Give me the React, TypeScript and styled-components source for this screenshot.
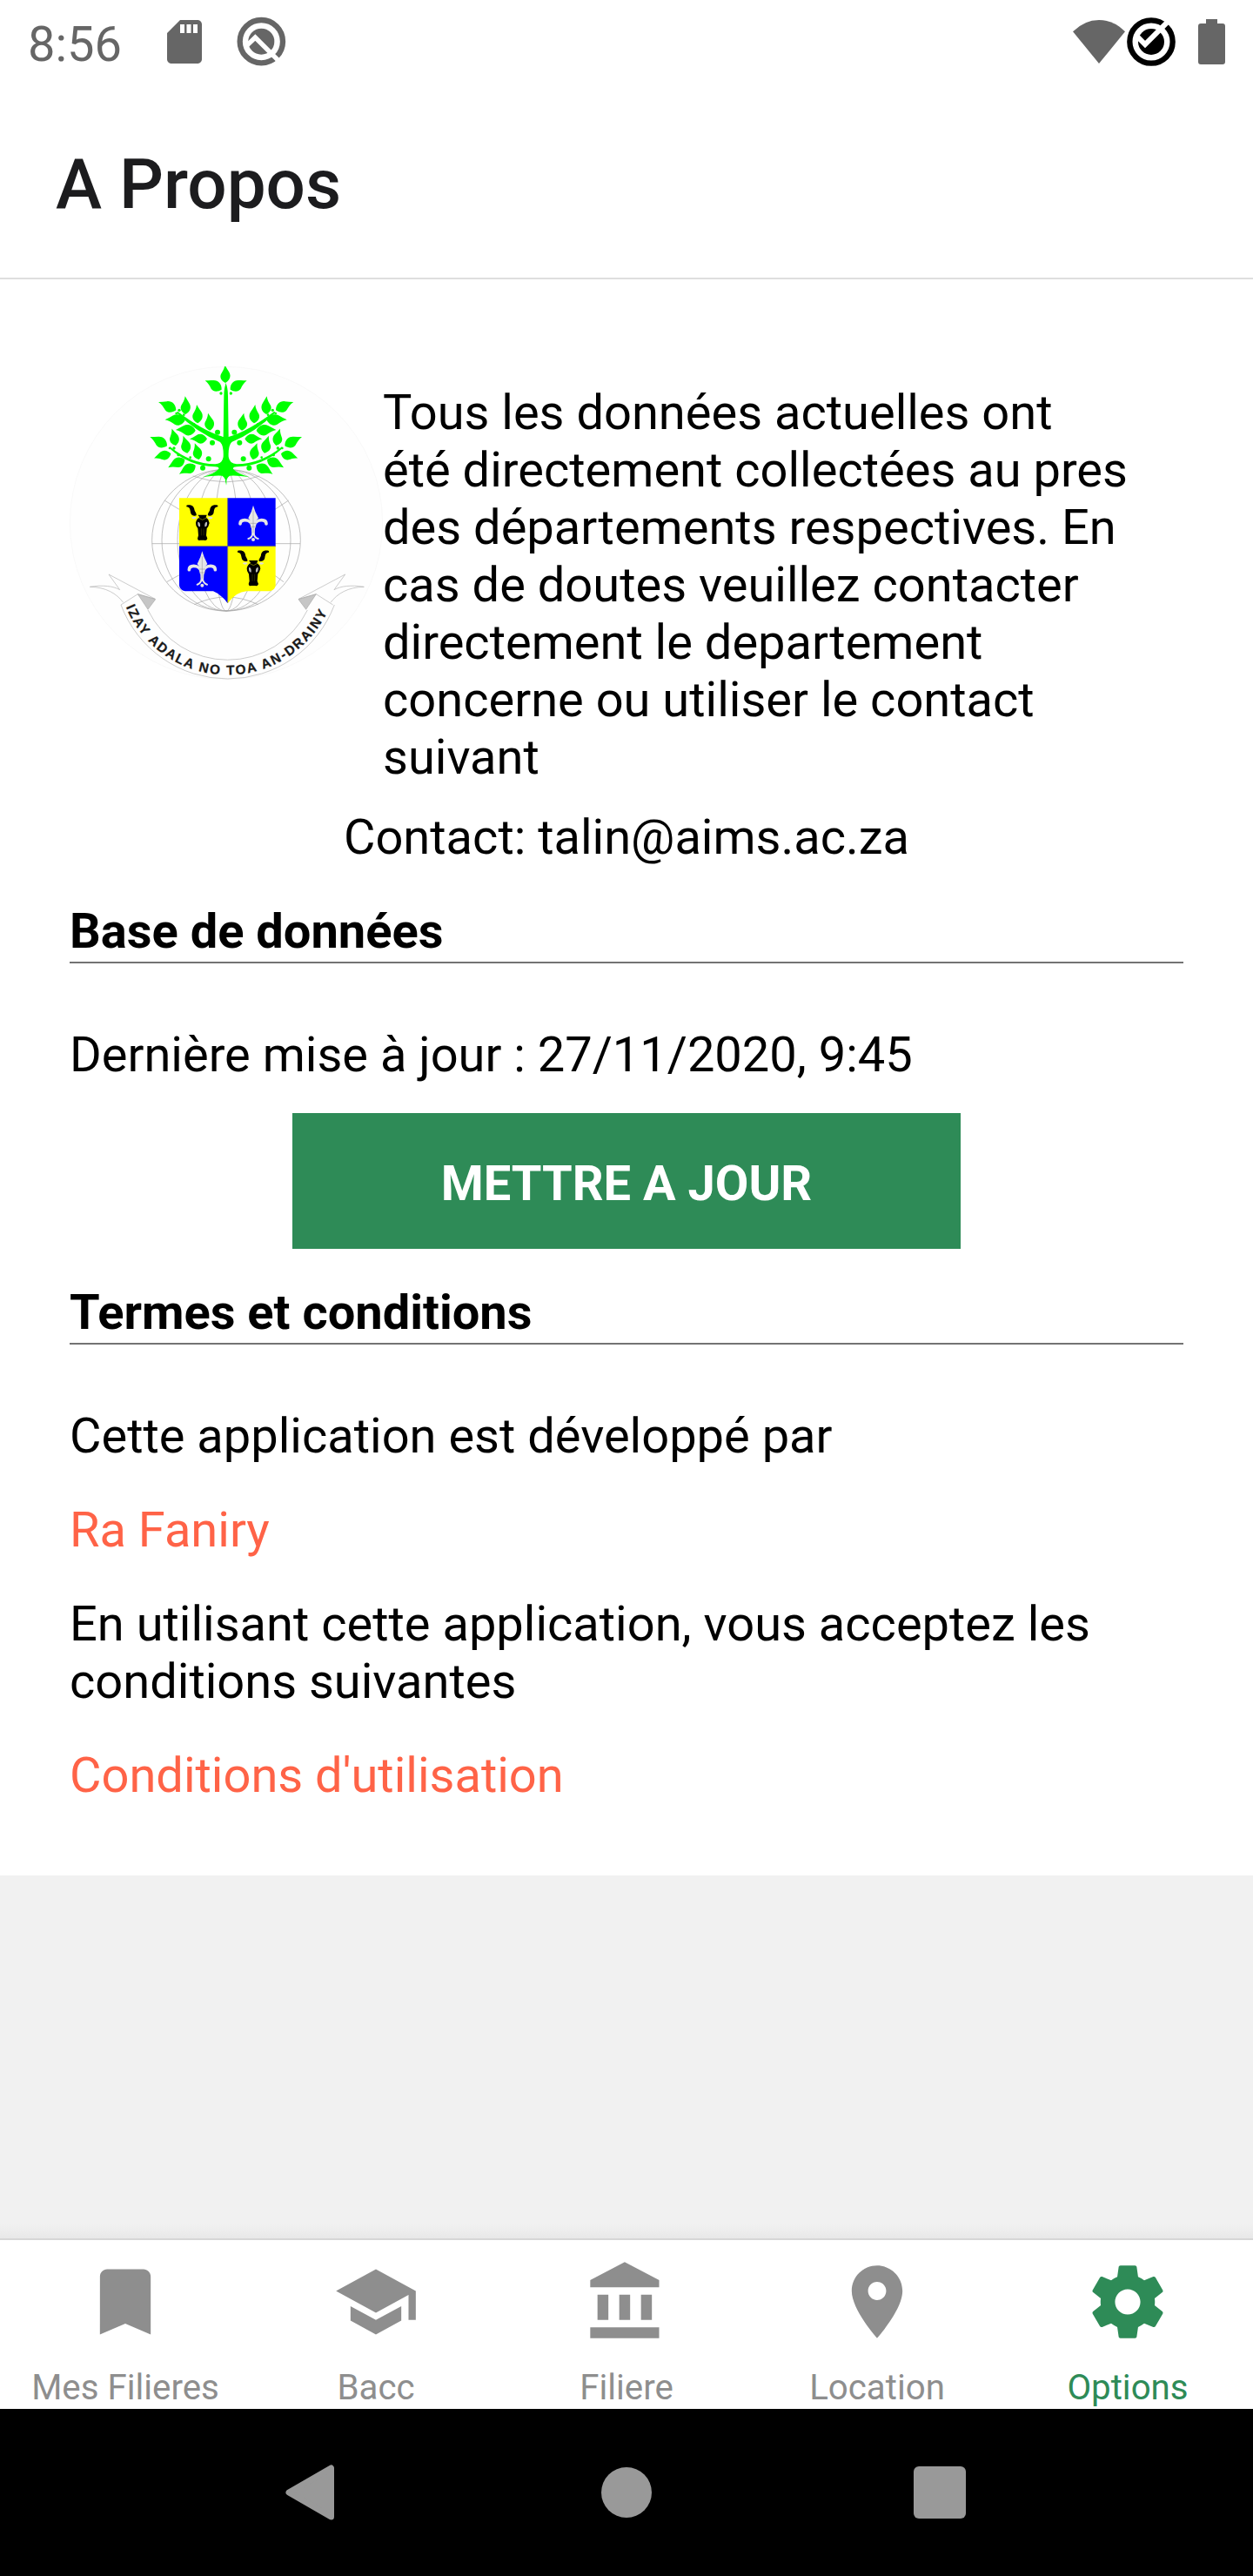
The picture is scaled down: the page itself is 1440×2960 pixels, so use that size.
import React from "react";
import styled, { createGlobalStyle } from "styled-components";

const GREEN = "#2e8b57";
const GREY = "#8e8e8e";

const GlobalStyle = createGlobalStyle`
  * { box-sizing: border-box; }
  body { margin: 0; background: #f1f1f1; font-family: Roboto, "Liberation Sans", sans-serif; }
  svg { display: block; flex: none; }
`;

const Screen = styled.div`
  width: 1440px;
  height: 2960px;
  display: flex;
  flex-direction: column;
  background: #f1f1f1;
  overflow: hidden;
`;

const StatusBar = styled.div`
  height: 84px;
  flex: none;
  display: flex;
  justify-content: space-between;
  padding: 18px 31px 0 32px;
  background: #fff;
`;

const StatusGroup = styled.div`
  display: flex;
  align-items: flex-start;
`;

const Clock = styled.span`
  width: 150px;
  font-size: 56px;
  line-height: 66px;
  color: #666;
`;

const StatusIcon = styled.svg<{ $left?: number; $top?: number }>`
  margin-left: ${(p) => p.$left ?? 0}px;
  margin-top: ${(p) => p.$top ?? 0}px;
`;

const TitleBar = styled.header`
  height: 237px;
  flex: none;
  padding: 81px 64px 0;
  background: #fff;
  border-bottom: 2px solid #dedede;
`;

const Title = styled.h1`
  margin: 0;
  font-size: 80px;
  line-height: 94px;
  font-weight: 500;
  color: #1c1c1e;
`;

const Content = styled.main`
  height: 1834px;
  flex: none;
  padding: 100px 80px 0;
  background: #fff;
  font-size: 56px;
  line-height: 66px;
  color: #000;
`;

const Intro = styled.section`
  display: flex;
`;

const IntroText = styled.p`
  margin: 20px 0 0;
  white-space: nowrap;
`;

const Contact = styled.p`
  margin: 26px 0 42px;
  text-align: center;
`;

const SectionTitle = styled.h2`
  margin: 0 0 72px;
  padding-bottom: 2px;
  border-bottom: 2px solid #737373;
  font-size: 56px;
  line-height: 66px;
  font-weight: 700;
`;

const Paragraph = styled.p<{ $gap: number }>`
  margin: 0 0 ${(p) => p.$gap}px;
`;

const TextLink = styled.a`
  display: block;
  margin-bottom: 42px;
  color: #ff6347;
`;

const UpdateButton = styled.button`
  display: block;
  width: 768px;
  height: 156px;
  margin: 0 auto 40px;
  padding: 6px 0 0;
  border: 0;
  background: ${GREEN};
  color: #fff;
  font: 700 56px/66px Roboto, "Liberation Sans", sans-serif;
`;

const Spacer = styled.div`
  flex: 1;
  background: linear-gradient(to bottom, #f1f1f1 calc(100% - 16px), #e8e8e8);
`;

const TabBar = styled.nav`
  height: 196px;
  flex: none;
  display: grid;
  grid-template-columns: repeat(5, 1fr);
  background: #fff;
  border-top: 2px solid #d6d6d6;
`;

const Tab = styled.div<{ $active?: boolean }>`
  display: flex;
  flex-direction: column;
  align-items: center;
  padding-top: 20.5px;
  color: ${(p) => (p.$active ? GREEN : GREY)};
`;

const TabLabel = styled.span`
  margin-top: 25.5px;
  font-size: 40.25px;
  line-height: 47px;
`;

const SystemNav = styled.div`
  height: 192px;
  flex: none;
  display: flex;
  align-items: center;
  justify-content: center;
  gap: 301px;
  padding-right: 2px;
  background: #000;
`;

const TABS = [
  { label: "Mes Filieres", d: "M17 3H7c-1.1 0-1.99.9-1.99 2L5 21l7-3 7 3V5c0-1.1-.9-2-2-2z" },
  { label: "Bacc", d: "M5 13.18v4L12 21l7-3.82v-4L12 17l-7-3.82zM12 3L1 9l11 6 9-4.91V17h2V9L12 3z" },
  { label: "Filiere", d: "M4 10v7h3v-7H4zm6 0v7h3v-7h-3zM2 22h19v-3H2v3zm14-12v7h3v-7h-3zm-4.5-9L2 6v2h19V6l-9.5-5z" },
  {
    label: "Location",
    d: "M12 2C8.13 2 5 5.13 5 9c0 5.25 7 13 7 13s7-7.75 7-13c0-3.87-3.13-7-7-7zm0 9.5c-1.38 0-2.5-1.12-2.5-2.5s1.12-2.5 2.5-2.5 2.5 1.12 2.5 2.5-1.12 2.5-2.5 2.5z",
  },
  {
    label: "Options",
    active: true,
    d: "M19.43 12.98c.04-.32.07-.64.07-.98s-.03-.66-.07-.98l2.11-1.65c.19-.15.24-.42.12-.64l-2-3.46c-.12-.22-.39-.3-.61-.22l-2.49 1c-.52-.4-1.08-.73-1.69-.98l-.38-2.65C14.46 2.18 14.25 2 14 2h-4c-.25 0-.46.18-.49.42l-.38 2.65c-.61.25-1.17.59-1.69.98l-2.49-1c-.23-.09-.49 0-.61.22l-2 3.46c-.13.22-.07.49.12.64l2.11 1.65c-.04.32-.07.65-.07.98s.03.66.07.98l-2.11 1.65c-.19.15-.24.42-.12.64l2 3.46c.12.22.39.3.61.22l2.49-1c.52.4 1.08.73 1.69.98l.38 2.65c.03.24.24.42.49.42h4c.25 0 .46-.18.49-.42l.38-2.65c.61-.25 1.17-.59 1.69-.98l2.49 1c.23.09.49 0 .61-.22l2-3.46c.12-.22.07-.49-.12-.64l-2.11-1.65zM12 15.5c-1.93 0-3.5-1.57-3.5-3.5s1.57-3.5 3.5-3.5 3.5 1.57 3.5 3.5-1.57 3.5-3.5 3.5z",
  },
];

/* Leaves of one half of the tree: base x, base y, tip x, tip y. */
const LEAVES: number[][] = [
  [554, 143, 498, 110],
  [397, 214, 337, 184],
  [430, 228, 430, 166],
  [472, 259, 470, 195],
  [514, 284, 509, 224],
  [428, 249, 359, 245],
  [464, 284, 396, 280],
  [504, 313, 444, 312],
  [366, 337, 308, 304],
  [396, 336, 384, 277],
  [436, 362, 423, 302],
  [476, 384, 463, 327],
  [379, 364, 321, 378],
  [427, 384, 369, 410],
  [464, 404, 407, 433],
];

/* Berries of one half of the tree: centre x, centre y, radius. */
const BERRIES: number[][] = [
  [552, 156, 5],
  [408, 214, 5],
  [398, 225, 4],
  [424, 230, 4],
  [459, 262, 4],
  [540, 290, 9],
  [522, 326, 9],
  [509, 382, 9],
  [489, 413, 9],
  [375, 345, 4],
  [390, 345, 5],
  [405, 368, 5],
  [446, 377, 4],
];

function Leaf({ c }: { c: number[] }) {
  const [bx, by, tx, ty] = c;
  const len = Math.hypot(tx - bx, ty - by);
  const angle = (Math.atan2(ty - by, tx - bx) * 180) / Math.PI;
  return (
    <path
      transform={`translate(${bx} ${by}) rotate(${angle}) scale(${len})`}
      d="M0 0C.1 -.2 .3 -.34 .5 -.24C.66 -.14 .78 -.06 1 -.03C.86 .05 .74 .12 .62 .2C.4 .34 .14 .26 0 0Z"
    />
  );
}

function TreeHalf() {
  return (
    <>
      {LEAVES.map((c, i) => (
        <Leaf key={i} c={c} />
      ))}
      {BERRIES.map(([x, y, r], i) => (
        <circle key={i} cx={x} cy={y} r={r} />
      ))}
      <path d="M570 120Q562 136 562 165L560 306Q490 285 402 218L399 223Q470 292 548 323Q562 335 560 375Q557 398 532 400Q450 400 376 340L373 344Q440 406 532 409Q548 410 543 418Q528 434 488 445Q530 438 556 440Q568 446 571 473Z" />
    </>
  );
}

function BullHead() {
  return (
    <g>
      <path
        d="M433 542C449 537 459 545 460 556C461 565 469 569 467 577C459 581 448 575 447 566C445 555 445 549 433 547ZM541 542C525 537 515 545 514 556C513 565 505 569 507 577C515 581 526 575 527 566C529 555 529 549 541 547Z"
        fill="#000"
      />
      <path d="M450 584Q460 579 468 584Q462 592 454 588ZM524 584Q514 579 506 584Q512 592 520 588Z" fill="#ddd" />
      <path
        d="M472 575H503L500 583Q510 590 512 603Q509 616 503 622L501 646L505 656Q502 665 494 662H480Q472 665 471 656L474 646L472 622Q464 612 465 602Q467 590 478 583Z"
        fill="#000"
      />
      <path d="M472 599Q482 599 480 616Q470 616 472 599ZM504 599Q494 599 496 616Q506 616 504 599Z" fill="#bbb" />
      <path d="M472 584L488 592L504 584" fill="none" stroke="#cc0" strokeWidth="1.5" />
      <path d="M484 622V646M492 622V646" fill="none" stroke="#660" strokeWidth="1.2" />
    </g>
  );
}

function Fleur() {
  return (
    <g fill="#e6e6e6">
      <path d="M663 542Q668 562 681 586Q672 594 668 606H658Q654 594 646 586Q659 562 663 542Z" />
      <path
        d="M660 616C659 602 648 593 634 593C623 593 618 598 618 606M666 616C667 602 678 593 692 593C703 593 708 598 708 606"
        fill="none"
        stroke="#e6e6e6"
        strokeWidth="11"
        strokeLinecap="round"
      />
      <path d="M656 604H670L668 644H658Z" />
      <path d="M662 638Q658 654 646 657M664 638Q668 654 680 657" fill="none" stroke="#e6e6e6" strokeWidth="6" strokeLinecap="round" />
      <circle cx="663" cy="660" r="6" />
      <path d="M663 560V636M652 604H674M652 616H674" stroke="#777" strokeWidth="1.2" fill="none" />
    </g>
  );
}

function RibbonEnd() {
  return (
    <>
      <path
        d="M207 885L265 848L325 865L165 780L203 833C180 820 145 816 100 823C155 824 192 846 215 877"
        fill="none"
        stroke="#b2b2b2"
        strokeWidth="2"
      />
      <path d="M265 848L326 866L300 901Z" fill="#c6c6c6" stroke="#999" strokeWidth="1.5" />
    </>
  );
}

function Crest() {
  return (
    <svg width="360" height="360" viewBox="30 63 1080 1080">
      <circle cx="570" cy="603" r="539" fill="#fefefe" stroke="#f2f2f2" strokeWidth="1.5" />
      <g fill="none" stroke="#aaa" strokeWidth="2.2">
        {[256, 222, 168, 105, 40].map((rx) => (
          <ellipse key={rx} cx="570" cy="662" rx={rx} ry="244" />
        ))}
        <path d="M314 674H825M357 525L408 556M785 525L738 556M365 806L412 780M768 806L735 782M455 441Q570 482 685 441M460 884Q570 832 680 884" />
      </g>
      <path d="M408 517H575V683H408Z" fill="#ff0" />
      <path d="M575 517H740V683H575Z" fill="#00f" />
      <path d="M408 683H575V880Q552 848 525 838H428Q410 834 408 818Z" fill="#00f" />
      <path d="M575 683H740V820Q736 835 720 838H640Q604 840 575 880Z" fill="#ff0" />
      <path d="M408 683H740M575 517V878" stroke="#666" strokeWidth="2.5" />
      <BullHead />
      <g transform="translate(176 157)">
        <BullHead />
      </g>
      <Fleur />
      <g transform="translate(-176 158)">
        <Fleur />
      </g>
      <g fill="#0f0">
        <Leaf c={[567, 120, 567, 58]} />
        <TreeHalf />
        <g transform="translate(1138 0) scale(-1 1)">
          <TreeHalf />
        </g>
      </g>
      <RibbonEnd />
      <g transform="translate(1145 0) scale(-1 1)">
        <RibbonEnd />
      </g>
      <path d="M207 885A393 393 0 0 0 943 885M300 903A306 306 0 0 0 850 903" fill="none" stroke="#b2b2b2" strokeWidth="2" />
      <path id="motto" d="M224 892A380 380 0 0 0 926 892" fill="none" />
      <text fontFamily="Liberation Sans, sans-serif" fontWeight="700" fontSize="46" fill="#1a1a1a" stroke="#1a1a1a" strokeWidth="0.8">
        <textPath href="#motto" textLength="874" lengthAdjust="spacing">
          IZAY ADALA NO TOA AN-DRAINY
        </textPath>
      </text>
    </svg>
  );
}

export default function App() {
  return (
    <>
      <GlobalStyle />
      <Screen>
        <StatusBar>
          <StatusGroup>
            <Clock>8:56</Clock>
            <StatusIcon width="60" height="60" viewBox="0 0 24 24" fill="#666">
              <path d="M18 2h-8L4.02 8 4 20c0 1.1.9 2 2 2h12c1.1 0 2-.9 2-2V4c0-1.1-.9-2-2-2zm-6 6h-2V4h2v4zm3 0h-2V4h2v4zm3 0h-2V4h2v4z" />
            </StatusIcon>
            <StatusIcon $left={30} $top={1} width="57" height="57" viewBox="815 57 171 171">
              <circle cx="900" cy="143" r="74" fill="none" stroke="#666" strokeWidth="19" />
              <circle cx="900" cy="143" r="45" fill="#666" />
              <path d="M850 157L879 129L968 218" fill="none" stroke="#fff" strokeWidth="16" />
            </StatusIcon>
          </StatusGroup>
          <StatusGroup>
            <StatusIcon $top={5} width="60" height="50" viewBox="159 69 180 150">
              <path d="M159 109Q199 69 249 69T339 109L249 219Z" fill="#666" />
            </StatusIcon>
            <StatusIcon $left={1} $top={1} width="58" height="58" viewBox="342 57 174 174">
              <circle cx="429" cy="144" r="74" fill="none" stroke="#000" strokeWidth="19" />
              <circle cx="429" cy="144" r="45" fill="#000" />
              <path d="M380 125L408 153L488 73" fill="none" stroke="#fff" strokeWidth="18" />
            </StatusIcon>
            <StatusIcon $left={25} $top={4} width="32" height="52" viewBox="591 66 96 156">
              <path d="M618 66H657V81H675Q684 81 684 90V213Q684 222 675 222H600Q591 222 591 213V90Q591 81 600 81H618Z" fill="#666" />
            </StatusIcon>
          </StatusGroup>
        </StatusBar>
        <TitleBar>
          <Title>A Propos</Title>
        </TitleBar>
        <Content>
          <Intro>
            <Crest />
            <IntroText>
              Tous les données actuelles ont
              <br />
              été directement collectées au pres
              <br />
              des départements respectives. En
              <br />
              cas de doutes veuillez contacter
              <br />
              directement le departement
              <br />
              concerne ou utiliser le contact
              <br />
              suivant
            </IntroText>
          </Intro>
          <Contact>Contact: talin@aims.ac.za</Contact>
          <SectionTitle>Base de données</SectionTitle>
          <Paragraph $gap={34}>Dernière mise à jour : 27/11/2020, 9:45</Paragraph>
          <UpdateButton>METTRE A JOUR</UpdateButton>
          <SectionTitle>Termes et conditions</SectionTitle>
          <Paragraph $gap={42}>Cette application est développé par</Paragraph>
          <TextLink>Ra Faniry</TextLink>
          <Paragraph $gap={42}>
            En utilisant cette application, vous acceptez les
            <br />
            conditions suivantes
          </Paragraph>
          <TextLink>Conditions d'utilisation</TextLink>
        </Content>
        <Spacer />
        <TabBar>
          {TABS.map((t) => (
            <Tab key={t.label} $active={t.active}>
              <svg width="100" height="100" viewBox="0 0 24 24" fill="currentColor">
                <path d={t.d} />
              </svg>
              <TabLabel>{t.label}</TabLabel>
            </Tab>
          ))}
        </TabBar>
        <SystemNav>
          <svg width="62" height="64" viewBox="0 0 62 64">
            <path d="M4 32L52.5 4V60Z" fill="#999" stroke="#999" strokeWidth="7" strokeLinejoin="round" />
          </svg>
          <svg width="58" height="58" viewBox="0 0 58 58">
            <circle cx="29" cy="29" r="29" fill="#999" />
          </svg>
          <svg width="60" height="60" viewBox="0 0 60 60">
            <rect width="60" height="60" rx="6" fill="#999" />
          </svg>
        </SystemNav>
      </Screen>
    </>
  );
}
